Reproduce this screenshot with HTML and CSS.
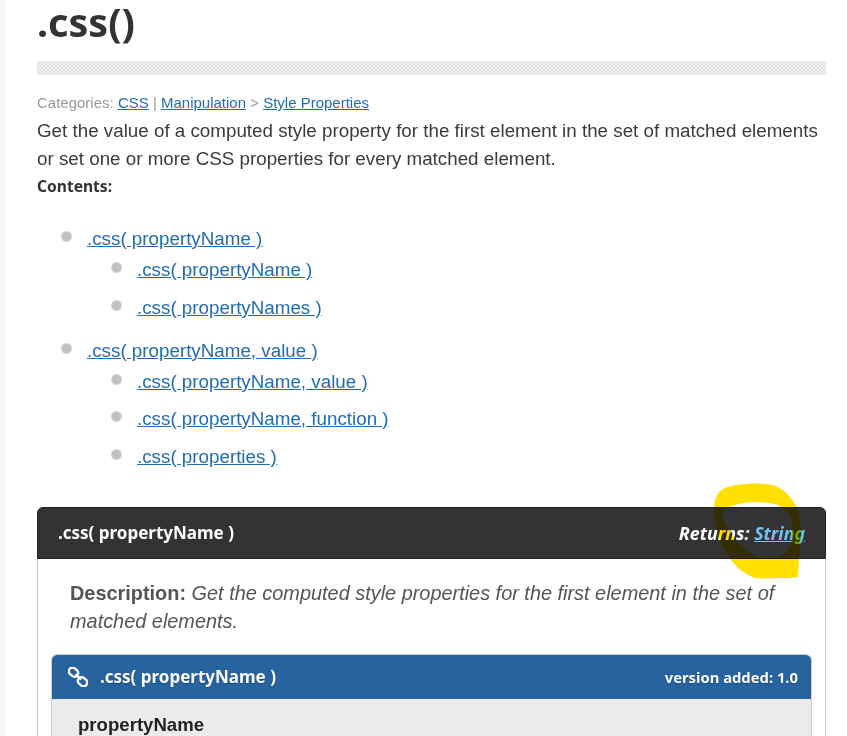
FILE: index.html
```html
<!DOCTYPE html>
<html lang="en">
<head>
  <meta charset="UTF-8">
  <meta name="viewport" content="width=device-width, initial-scale=1.0">
  <title>.css() | jQuery API Documentation</title>
  <link rel="stylesheet" href="styles.css">
</head>
<body>

<div class="page">
  <h1 class="title">.css()</h1>
  <div class="hatch"></div>

  <div class="categories">
    Categories: <a href="#">CSS</a> | <a href="#">Manipulation</a> &gt; <a href="#">Style Properties</a>
  </div>
  <p class="summary">Get the value of a computed style property for the first element in the set of matched elements or set one or more CSS properties for every matched element.</p>
  <h3 class="contents">Contents:</h3>

  <ul class="toc">
    <li>
      <a href="#">.css( propertyName )</a>
      <ul>
        <li><a href="#">.css( propertyName )</a></li>
        <li><a href="#">.css( propertyNames )</a></li>
      </ul>
    </li>
    <li>
      <a href="#">.css( propertyName, value )</a>
      <ul>
        <li><a href="#">.css( propertyName, value )</a></li>
        <li><a href="#">.css( propertyName, function )</a></li>
        <li><a href="#">.css( properties )</a></li>
      </ul>
    </li>
  </ul>

  <div class="entry">
    <div class="entry-head">
      <span class="entry-name">.css( propertyName )</span>
      <span class="returns">Returns: <a href="#">String</a></span>
    </div>
    <div class="entry-body">
      <p class="desc"><strong>Description:</strong> <em>Get the computed style properties for the first element in the set of matched elements.</em></p>
      <div class="signature">
        <div class="signature-head">
          <span class="signature-name">
            <svg class="link-icon" viewBox="0 0 20 20" width="20" height="20">
              <g fill="none" stroke="#fff" stroke-width="2.4">
                <rect x="0.5" y="1.5" width="10" height="7.4" rx="3.7" transform="rotate(40 5.5 5.2)"/>
                <rect x="9.5" y="11" width="10" height="7.4" rx="3.7" transform="rotate(40 14.5 14.7)"/>
              </g>
              <path d="M7.5 7l5.5 5.5" stroke="#fff" stroke-width="2.4"/>
            </svg>
            .css( propertyName )
          </span>
          <span class="version">version added: 1.0</span>
        </div>
        <div class="signature-body">
          <div class="arg">propertyName</div>
        </div>
      </div>
    </div>
  </div>
</div>

<!-- marker scribble someone drew over the screenshot -->
<svg class="scribble" viewBox="0 0 847 736" width="847" height="736">
  <path fill="#ffe000" fill-rule="evenodd" d="M714.3 503C716 495 720 490 725 488C733 485 740 484 748 484C757 483 765 484 772 485C779 487 784 490 788 495C793 500 796 505 798 511C800 518 801 525 801 531C801 540 800 549 799 558C799 565 798 571 798 577C792 578 787 578 782 578C773 578 764 579 755 578C749 576 743 572 738 568C733 563 729 557 725 551C721 544 718 536 717 528C715 519 714 511 714.3 503Z
  M721 513C725 509 730 506 735 505C742 503 748 502 755 502C762 502 769 503 775 504C781 506 786 510 790 515C792 520 792 526 792 531C792 536 792 541 791 546C788 551 784 554 780 556C774 558 768 559 762 558C756 556 750 553 745 550C739 545 734 538 730 531C726 525 723 519 721 513Z"/>
</svg>

</body>
</html>
```

FILE: styles.css
```css
html, body {
  margin: 0;
  height: 736px;
  overflow: hidden;
}
body {
  position: relative;
  background: #fff;
  border-left: 5px solid #f8f8f8;
  font-family: "Liberation Sans", Arial, sans-serif;
  color: #3b3b3b;
}
a {
  color: #1f6db3;
}
.page {
  width: 789px;
  margin-left: 32px;
}
.title {
  margin: 0;
  height: 61px;
  font-family: "Noto Sans", sans-serif;
  font-size: 39.5px;
  font-weight: 700;
  line-height: 45px;
  color: #333;
}
.hatch {
  height: 14px;
  background-color: #eee;
  background-image: repeating-conic-gradient(#e2e2e2 0 25%, #f0f0f0 0 50%);
  background-size: 4px 4px;
}
.categories {
  margin-top: 19px;
  font-size: 15px;
  line-height: 18px;
  color: #999;
}
.summary {
  margin: 5px 0 0;
  font-size: 18.8px;
  line-height: 28px;
  color: #3b3b3b;
}
.contents {
  margin: 0;
  font-family: "Noto Sans", sans-serif;
  font-size: 15.6px;
  font-weight: 700;
  line-height: 26px;
  color: #333;
}
.toc {
  list-style: none;
  margin: 28px 0 0;
  padding: 0 0 0 50px;
  font-size: 18.8px;
  line-height: 24px;
}
.toc > li {
  margin-bottom: 19px;
}
.toc ul {
  list-style: none;
  margin: 7px 0 0;
  padding: 0 0 0 50px;
}
.toc ul li {
  margin-bottom: 13.5px;
}
.toc li {
  position: relative;
}
.toc li::before {
  content: "";
  position: absolute;
  left: -26px;
  top: 4px;
  width: 11px;
  height: 11px;
  border-radius: 50%;
  background: radial-gradient(circle, #c0c0c0 0 45%, #d0d0d0 65%, #fff 100%);
}
.entry {
  margin-top: 38px;
}
.entry-head {
  display: flex;
  justify-content: space-between;
  align-items: center;
  box-sizing: border-box;
  height: 52px;
  padding: 0 20px;
  background: #333;
  border: 1px solid #222;
  border-radius: 6px 6px 0 0;
  font-family: "Noto Sans", sans-serif;
  font-size: 17px;
  font-weight: 700;
  color: #fff;
}
.returns {
  font-size: 17.8px;
  font-style: italic;
}
.returns a {
  color: #6ec3f2;
}
.entry-body {
  border-left: 1px solid #ccc;
  border-right: 1px solid #ccc;
  padding: 20px 13px 0;
}
.desc {
  margin: 0 0 19px;
  padding: 0 19px;
  font-size: 19.9px;
  line-height: 28px;
  color: #555;
}
.signature {
  border-radius: 6px 6px 0 0;
  border-right: 1px solid #ccc;
  border-left: 1px solid #ccc;
}
.signature-head {
  display: flex;
  justify-content: space-between;
  align-items: center;
  height: 45px;
  padding: 0 13px 0 16px;
  background: #26639f;
  border-top: 1px solid #ccc;
  border-radius: 6px 6px 0 0;
  box-sizing: border-box;
  font-family: "Noto Sans", sans-serif;
  font-weight: 700;
  color: #fff;
  text-shadow: 0 1px 1px #1a4a78;
}
.signature-name {
  display: flex;
  align-items: center;
  gap: 12px;
  font-size: 17px;
}
.version {
  font-size: 14.8px;
}
.signature-body {
  background: #ececec;
  padding: 14px 26px;
  height: 40px;
}
.arg {
  font-size: 18.6px;
  font-weight: 700;
  line-height: 24px;
  color: #222;
}
.scribble {
  position: absolute;
  top: 0;
  left: -5px;
  mix-blend-mode: multiply;
  pointer-events: none;
}
```
